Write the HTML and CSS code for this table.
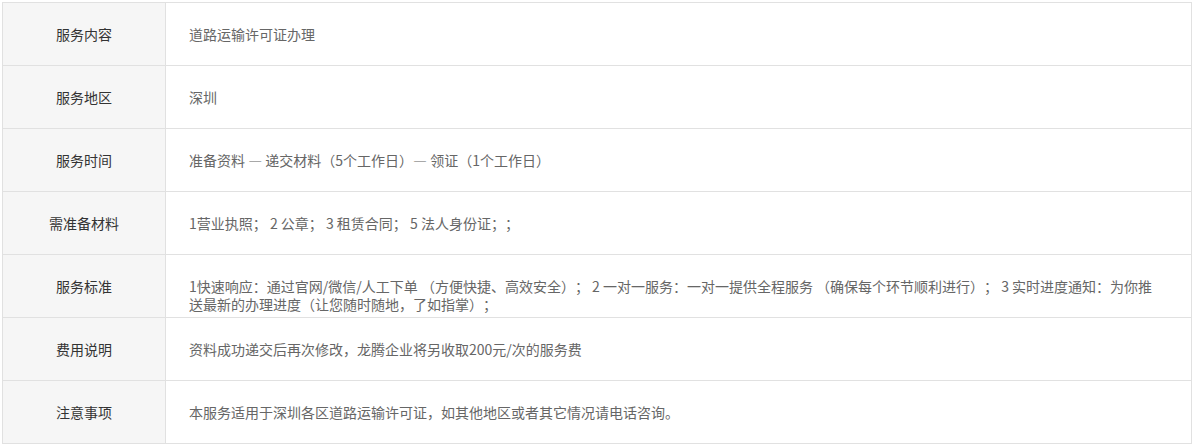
FILE: index.html
```html
<!DOCTYPE html>
<html lang="zh-CN">
<head>
<meta charset="utf-8">
<title>服务详情</title>
<link rel="stylesheet" href="styles.css">
</head>
<body>
<table class="info">
  <tbody>
    <tr><th class="label">服务内容</th><td class="value">道路运输许可证办理</td></tr>
    <tr><th class="label">服务地区</th><td class="value">深圳</td></tr>
    <tr><th class="label">服务时间</th><td class="value">准备资料 — 递交材料（5个工作日）— 领证（1个工作日）</td></tr>
    <tr><th class="label">需准备材料</th><td class="value">1营业执照； 2 公章； 3 租赁合同； 5 法人身份证；；</td></tr>
    <tr><th class="label">服务标准</th><td class="value">1快速响应：通过官网/微信/人工下单 （方便快捷、高效安全）； 2 一对一服务：一对一提供全程服务 （确保每个环节顺利进行）； 3 实时进度通知：为你推送最新的办理进度（让您随时随地，了如指掌）；</td></tr>
    <tr><th class="label">费用说明</th><td class="value">资料成功递交后再次修改，龙腾企业将另收取200元/次的服务费</td></tr>
    <tr><th class="label">注意事项</th><td class="value">本服务适用于深圳各区道路运输许可证，如其他地区或者其它情况请电话咨询。</td></tr>
  </tbody>
</table>
</body>
</html>
```

FILE: styles.css
```css
html, body {
  margin: 0;
  padding: 0;
  background: #ffffff;
}
body {
  padding: 2px;
  font-family: "Microsoft YaHei", "Noto Sans CJK SC", "Noto Sans", sans-serif;
  font-size: 14px;
  line-height: 18px;
  text-spacing-trim: space-all;
}
.info {
  width: 1190px;
  border-collapse: collapse;
  table-layout: fixed;
  border: 1px solid #e1e1e1;
}
.info tr {
  height: 63px;
}
.label, .value {
  border: 1px solid #e1e1e1;
  height: 62px;
  box-sizing: border-box;
  vertical-align: top;
  padding-top: 22px;
  padding-bottom: 0;
}
.label {
  width: 163px;
  background: #f6f6f6;
  color: #333333;
  font-weight: normal;
  text-align: center;
  padding-left: 0;
  padding-right: 0;
}
.value {
  color: #666666;
  text-align: left;
  padding-left: 23px;
  padding-right: 28px;
}
```
